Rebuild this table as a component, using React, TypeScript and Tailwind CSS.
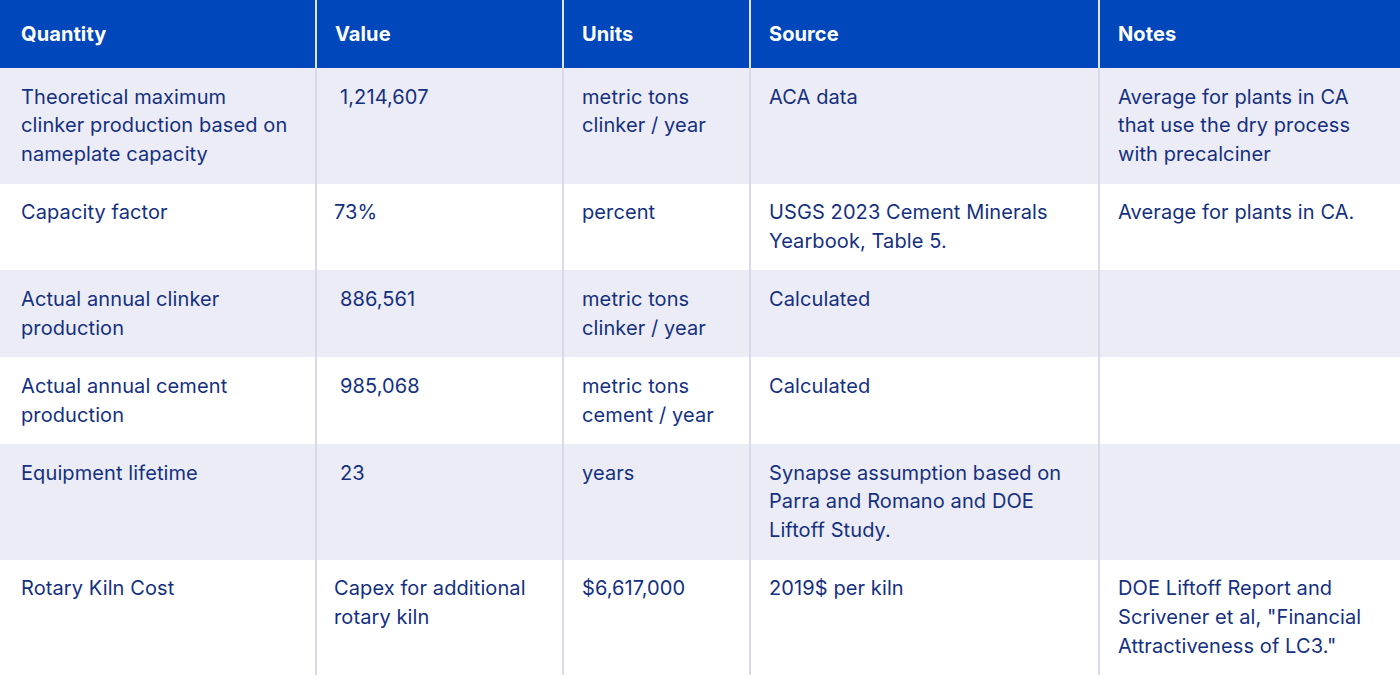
const COLS = ['Quantity', 'Value', 'Units', 'Source', 'Notes']

interface Row {
  quantity: string
  value: string
  indent?: boolean
  units: string
  source: string
  notes: string
}

// line breaks follow the original table's wrapping
const ROWS: Row[] = [
  {
    quantity: 'Theoretical maximum\nclinker production based on\nnameplate capacity',
    value: '1,214,607',
    indent: true,
    units: 'metric tons\nclinker / year',
    source: 'ACA data',
    notes: 'Average for plants in CA\nthat use the dry process\nwith precalciner',
  },
  {
    quantity: 'Capacity factor',
    value: '73%',
    units: 'percent',
    source: 'USGS 2023 Cement Minerals\nYearbook, Table 5.',
    notes: 'Average for plants in CA.',
  },
  {
    quantity: 'Actual annual clinker\nproduction',
    value: '886,561',
    indent: true,
    units: 'metric tons\nclinker / year',
    source: 'Calculated',
    notes: '',
  },
  {
    quantity: 'Actual annual cement\nproduction',
    value: '985,068',
    indent: true,
    units: 'metric tons\ncement / year',
    source: 'Calculated',
    notes: '',
  },
  {
    quantity: 'Equipment lifetime',
    value: '23',
    indent: true,
    units: 'years',
    source: 'Synapse assumption based on\nParra and Romano and DOE\nLiftoff Study.',
    notes: '',
  },
  {
    quantity: 'Rotary Kiln Cost',
    value: 'Capex for additional\nrotary kiln',
    units: '$6,617,000',
    source: '2019$ per kiln',
    notes: 'DOE Liftoff Report and\nScrivener et al, "Financial\nAttractiveness of LC3."',
  },
]

const GRID = 'grid grid-cols-[315px_247px_187px_349px_1fr]'

// left padding per column (after the 2px divider)
const PAD = ['pl-[21px] pr-2', 'pl-[17px] pr-2', 'pl-[18px] pr-2', 'pl-[18px] pr-2', 'pl-[18px] pr-2']

export default function App() {
  return (
    <div className="min-h-screen bg-white font-['Inter',sans-serif] text-[20px] tracking-[0.1px] text-[#14307f]">
      <div className={`${GRID} bg-[#0047bb] text-white font-bold`}>
        {COLS.map((c, i) => (
          <div
            key={c}
            className={['h-[68px] flex items-center', i > 0 ? 'border-l-2 border-[#dfe3f4] pl-[18px]' : 'pl-[21px]'].join(' ')}
          >
            {c}
          </div>
        ))}
      </div>

      {ROWS.map((r, idx) => {
        const cells = [r.quantity, r.value, r.units, r.source, r.notes]
        return (
          <div key={idx} className={`${GRID} ${idx % 2 === 0 ? 'bg-[#ececf6]' : 'bg-white'}`}>
            {cells.map((c, i) => (
              <div
                key={i}
                className={[
                  'py-[14.6px] leading-[28.8px] whitespace-pre-line',
                  PAD[i],
                  i > 0 ? 'border-l-2 border-[#d9d9eb]' : '',
                  i === 1 && r.indent ? 'pl-[23px]' : '',
                ].join(' ')}
              >
                {c}
              </div>
            ))}
          </div>
        )
      })}
    </div>
  )
}
